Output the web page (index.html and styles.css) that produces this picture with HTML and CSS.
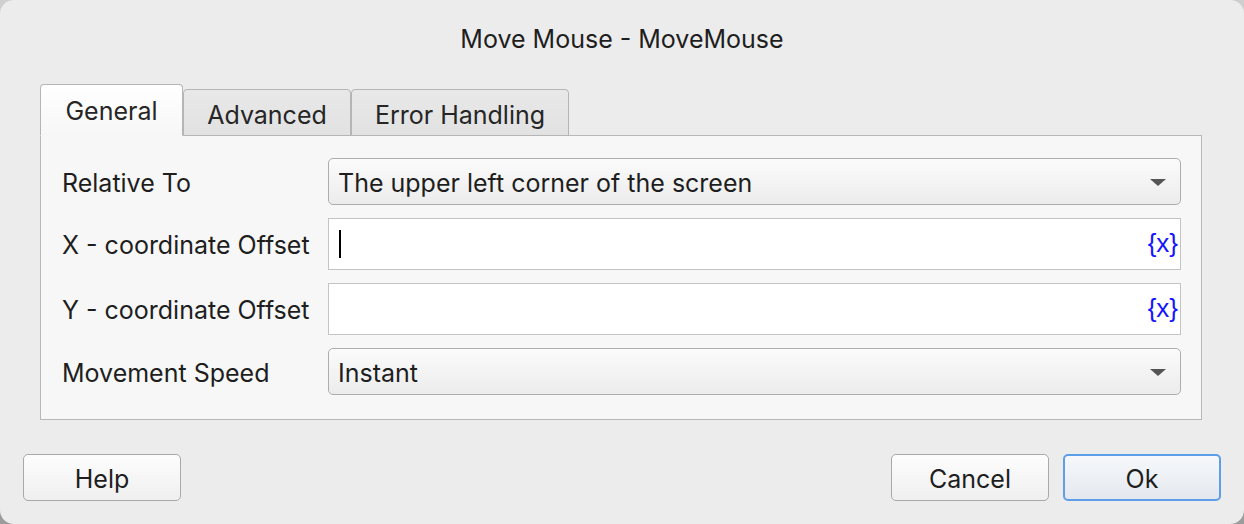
FILE: index.html
```html
<!DOCTYPE html>
<html>
<head>
<meta charset="utf-8">
<link rel="stylesheet" href="styles.css">
</head>
<body>
<div class="window">
  <div class="title">Move Mouse - MoveMouse</div>
  <div class="tabs">
    <div class="tab tab-general active">General</div>
    <div class="tab tab-advanced">Advanced</div>
    <div class="tab tab-error">Error Handling</div>
  </div>
  <div class="panel">
    <div class="row">
      <div class="label">Relative To</div>
      <div class="combo"><span>The upper left corner of the screen</span><span class="arrow"></span></div>
    </div>
    <div class="row">
      <div class="label">X - coordinate Offset</div>
      <div class="field"><span class="caret"></span><span class="var">{x}</span></div>
    </div>
    <div class="row">
      <div class="label">Y - coordinate Offset</div>
      <div class="field"><span class="var">{x}</span></div>
    </div>
    <div class="row">
      <div class="label">Movement Speed</div>
      <div class="combo combo-short"><span>Instant</span><span class="arrow"></span></div>
    </div>
  </div>
  <div class="footer">
    <button class="btn">Help</button>
    <div class="spacer"></div>
    <button class="btn">Cancel</button>
    <button class="btn btn-default">Ok</button>
  </div>
</div>
</body>
</html>
```

FILE: styles.css
```css
html, body {
  margin: 0;
  padding: 0;
}
body {
  width: 1244px;
  height: 524px;
  background: linear-gradient(#cfcfcf, #9c9c9c);
  font-family: Inter, "Liberation Sans", Arial, sans-serif;
  color: #222;
  overflow: hidden;
}
.window {
  width: 1244px;
  height: 524px;
  box-sizing: border-box;
  background: #ececec;
  border-radius: 14px;
  display: flex;
  flex-direction: column;
}
.title {
  height: 84px;
  padding-top: 24px;
  box-sizing: border-box;
  text-align: center;
  font-size: 25px;
  color: #1e1e1e;
}
.tabs {
  display: flex;
  align-items: flex-end;
  padding-left: 40px;
  height: 52px;
  position: relative;
  z-index: 1;
  margin-bottom: -1px;
}
.tab {
  box-sizing: border-box;
  height: 47px;
  border: 1px solid #b5b5b5;
  border-bottom: 1px solid #b5b5b5;
  border-radius: 4px 4px 0 0;
  background: linear-gradient(#e8e8e8, #e2e2e2);
  font-size: 25px;
  display: flex;
  align-items: center;
  justify-content: center;
  padding-top: 4px;
  color: #262626;
}
.tab-general {
  width: 143px;
  height: 52px;
  background: linear-gradient(#ffffff, #f7f7f7);
  border-bottom-color: #f7f7f7;
  padding-top: 2px;
}
.tab-advanced {
  width: 168px;
}
.tab-error {
  width: 218px;
}
.panel {
  margin: 0 42px 0 40px;
  height: 285px;
  box-sizing: border-box;
  border: 1px solid #b8b8b8;
  background: #f7f7f7;
  padding: 22px 20px 0 21px;
  display: flex;
  flex-direction: column;
  gap: 13px;
}
.row {
  display: flex;
  align-items: center;
}
.label {
  width: 266px;
  font-size: 25px;
  color: #1e1e1e;
  padding-top: 2px;
}
.combo {
  flex: 1;
  height: 47px;
  box-sizing: border-box;
  border: 1px solid #adadad;
  border-radius: 5px;
  background: linear-gradient(#fbfbfb, #ececec);
  display: flex;
  align-items: center;
  padding: 2px 14px 0 9px;
  font-size: 25px;
  color: #1e1e1e;
}
.combo span:first-child {
  flex: 1;
}
.arrow {
  width: 0;
  height: 0;
  border-left: 8px solid transparent;
  border-right: 8px solid transparent;
  border-top: 7px solid #555;
}
.field {
  flex: 1;
  height: 52px;
  box-sizing: border-box;
  border: 1px solid #c4c4c4;
  background: #ffffff;
  display: flex;
  align-items: center;
  padding: 0 2px 0 10px;
}
.caret {
  width: 2px;
  height: 28px;
  background: #000;
}
.var {
  margin-left: auto;
  color: #1414ff;
  font-family: "Liberation Sans", Arial, sans-serif;
  font-size: 26px;
  padding-bottom: 2px;
}
.footer {
  display: flex;
  align-items: center;
  padding: 34px 23px 0 23px;
  gap: 14px;
}
.spacer {
  flex: 1;
}
.btn {
  width: 158px;
  height: 47px;
  box-sizing: border-box;
  border: 1px solid #a9a9a9;
  border-radius: 5px;
  background: linear-gradient(#fdfdfd, #efefef);
  font-family: Inter, "Liberation Sans", Arial, sans-serif;
  font-size: 25px;
  color: #1e1e1e;
  padding: 2px 0 0 0;
}
.btn-default {
  border: 2px solid #5c9ee8;
  background: linear-gradient(#f6f8fb, #e4e8ee);
}
```
